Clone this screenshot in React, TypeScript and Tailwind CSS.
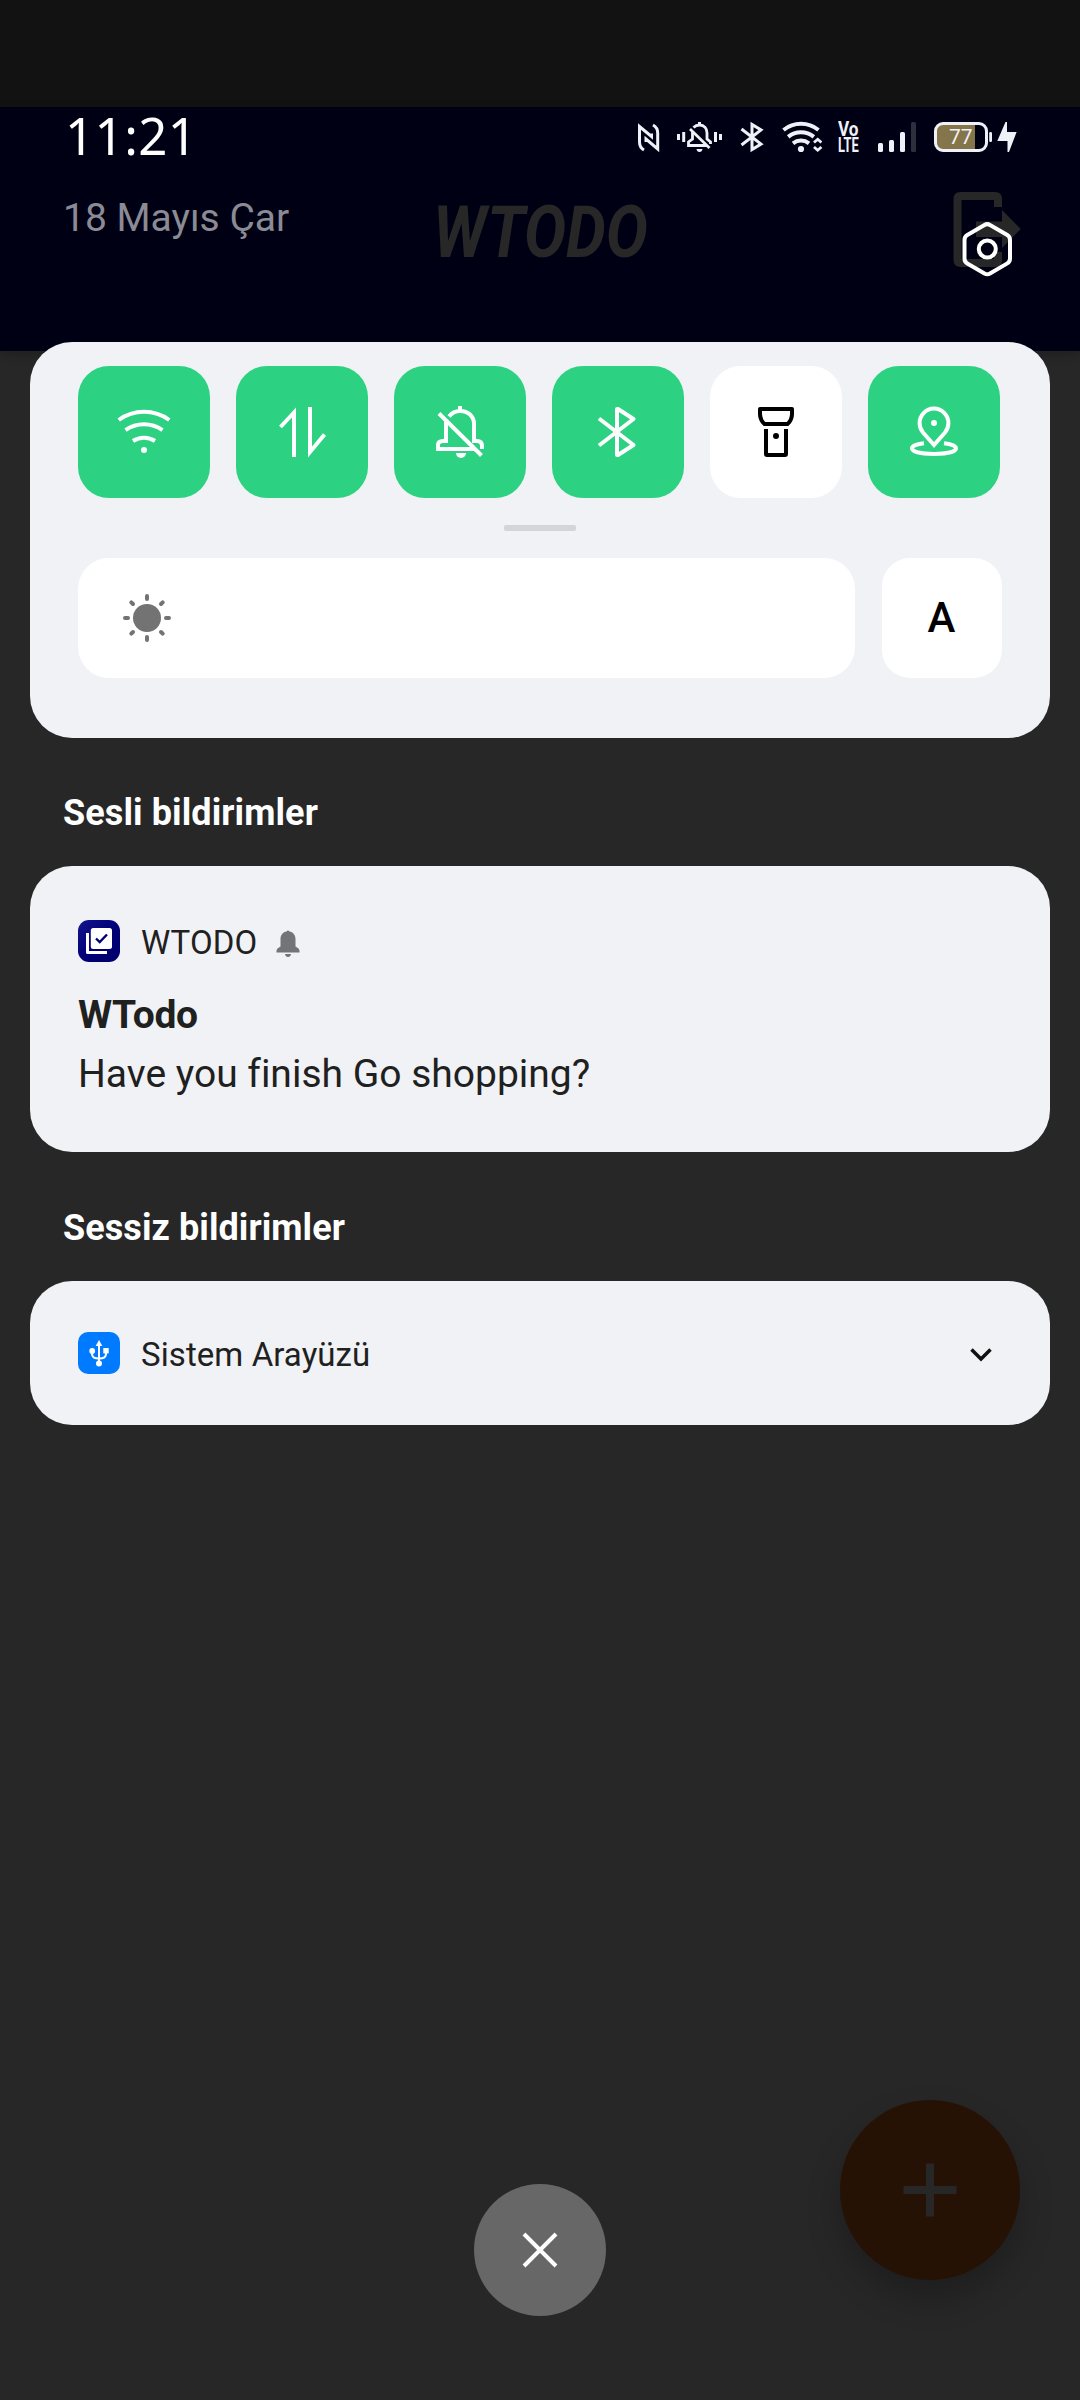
import type { ReactNode } from 'react';

const roboto = "font-['Roboto',sans-serif]";

function NfcIcon() {
  return (
    <svg width="40" height="45" viewBox="10 15 40 45" fill="none" stroke="#f0f1f8" strokeWidth="3">
      <path d="M24 50Q19.5 47.500 19.500 42V26.500L31.500 36.500V33.500" />
      <path d="M33 25Q37.700 27.500 37.700 33V49L26 39V42" />
    </svg>
  );
}

function VibrateBellOffIcon() {
  return (
    <svg width="60" height="45" viewBox="50 15 60 45" fill="none" stroke="#f0f1f8" strokeWidth="2.800">
      <path d="M58.500 34V40M63.700 32V42M95.500 32V42M100.500 34V40" strokeWidth="3" />
      <path d="M79.500 22V25" strokeWidth="3" />
      <path d="M73.500 27.500Q76 25 79.500 25C84.500 25 87 28.500 87 33V39L90.500 42V44" />
      <path d="M72.500 32V39L68.500 42V45.500H87" />
      <path d="M70 29L89.500 48" />
      <path d="M76.500 49H82.500Q82 52 79.500 52T76.500 49Z" fill="#f0f1f8" stroke="none" />
    </svg>
  );
}

function BluetoothStatusIcon() {
  return (
    <svg width="40" height="45" viewBox="110 15 40 45" fill="none" stroke="#f0f1f8" strokeWidth="3">
      <path d="M121.500 29L141 44L132 49.500V24.500L141 30L121.500 45" />
    </svg>
  );
}

function WifiStatusIcon() {
  return (
    <svg width="60" height="45" viewBox="150 15 60 45" fill="none" stroke="#f0f1f8" strokeWidth="4">
      <path d="M163.500 30A28 28 0 0 1 198.500 30" />
      <path d="M168.200 36.900A20 20 0 0 1 193.800 36.900" />
      <path d="M173 43.300A13 13 0 0 1 189 43.300" />
      <circle cx="181" cy="49" r="3.100" fill="#f0f1f8" stroke="none" />
      <path d="M194 42.500L197.700 39.300L201.400 42.500M194 47L197.700 50.200L201.400 47" strokeWidth="2.800" />
    </svg>
  );
}

function VolteLabel() {
  return (
    <div className="flex h-[45px] w-10 flex-col pt-[7px] pl-2 text-[19.5px] leading-[15.5px] font-bold text-[#f0f1f8]">
      <span className="w-0 origin-left scale-x-[0.88]">Vo</span>
      <span className="w-0 origin-left scale-x-[0.66]">LTE</span>
    </div>
  );
}

function SignalIcon() {
  return (
    <svg width="55" height="45" viewBox="50 15 55 45" fill="#f0f1f8">
      <rect x="58" y="43" width="5" height="9" rx="1.500" />
      <rect x="69" y="40" width="5" height="12" rx="1.500" />
      <rect x="80" y="32" width="5" height="20" rx="1.500" />
      <rect x="91" y="22" width="5" height="30" rx="1.500" fill="#2e2e3d" />
    </svg>
  );
}

function BatteryIcon() {
  return (
    <svg width="100" height="45" viewBox="105 15 100 45">
      <path d="M155 23.500V50.500H123Q115.500 50.500 115.500 43V31Q115.500 23.500 123 23.500Z" fill="#84754a" />
      <rect x="115.500" y="23.500" width="51" height="27" rx="7.500" fill="none" stroke="#f0f1f8" strokeWidth="3" />
      <rect x="169.200" y="32" width="2.800" height="10" rx="1.200" fill="#f0f1f8" />
      <text x="129" y="44" fill="#f0f1f8" textLength="23.500" className={`${roboto} text-[21px]`}>77</text>
      <path d="M185.500 22H187V32H196.600L189 52H187.500V41H177.300Z" fill="#f0f1f8" />
    </svg>
  );
}

function Tile({ on = true, children }: { on?: boolean; children: ReactNode }) {
  return (
    <button className={`size-[132px] rounded-[31px] ${on ? 'bg-[#2cd282] text-white' : 'bg-white text-black'}`}>
      <svg viewBox="0 0 132 132" className="size-full" fill="none" stroke="currentColor" strokeWidth="4">
        {children}
      </svg>
    </button>
  );
}

function AppBadge({ children }: { children: ReactNode }) {
  return (
    <svg width="42" height="42" viewBox="0 0 42 42" className="shrink-0">
      {children}
    </svg>
  );
}

export default function App() {
  return (
    <div className={`relative flex h-[2400px] w-[1080px] flex-col overflow-hidden bg-[#272727] ${roboto}`}>
      <div className="h-[107px] shrink-0 bg-[#121212]" />

      <header className="h-[244px] shrink-0 bg-[#000014] shadow-[0_4px_10px_rgba(0,0,0,0.2)]">
        <div className="flex h-[62px] items-start justify-between pr-[55px] pl-[65px]">
          <time className="-mt-0.5 font-['Noto_Sans',sans-serif] text-[51px] leading-[60px] tracking-[0.4px] text-white">11:21</time>
          <div className="flex pt-2">
            <NfcIcon />
            <VibrateBellOffIcon />
            <BluetoothStatusIcon />
            <WifiStatusIcon />
            <VolteLabel />
            <SignalIcon />
            <BatteryIcon />
          </div>
        </div>
        <div className="flex items-start pr-[59px] pl-[63px]">
          <span className="mt-[19px] w-[370px] text-[39px] leading-[60px] text-[#8b8b93]">18 Mayıs Çar</span>
          <h1 className="mt-7 origin-left scale-x-[0.875] text-[72px] leading-[72px] font-bold whitespace-nowrap text-[#272727] italic">
            WTODO
          </h1>
          <div className="relative mt-[23px] ml-auto h-[86px] w-[68px]">
            <svg width="68" height="75" viewBox="953 192 68 75">
              <path
                d="M998 207V199Q998 196 995 196H960.500Q957.500 196 957.500 199V260Q957.500 263 960.500 263H995Q998 263 998 260V252"
                fill="none"
                stroke="#272727"
                strokeWidth="8"
              />
              <path d="M976 221.500H1002V210L1020.700 229L1002 248V237H976Z" fill="#272727" />
            </svg>
            <svg width="54" height="58" viewBox="960 220 54 58" className="absolute top-[28px] left-[7px]" fill="none" stroke="#fff" strokeWidth="4">
              <path d="M984.500 225Q987.300 223.300 990 225L1007.300 235Q1010 236.600 1010 240V258.500Q1010 261.800 1007.300 263.400L990 273.400Q987.300 275 984.500 273.400L967.300 263.400Q964.500 261.800 964.500 258.500V240Q964.500 236.600 967.300 235Z" />
              <circle cx="987.300" cy="249" r="8.500" />
            </svg>
          </div>
        </div>
      </header>

      <main className="relative -mt-[9px] px-[30px]">
        <section className="h-[396px] rounded-[42px] bg-[#f0f2f6] px-12 pt-6">
          <div className="flex gap-[26px]">
            <Tile>
              <path d="M40.700 54A43 43 0 0 1 91.300 54M47.500 64.200A32 32 0 0 1 84.500 64.200M55 75A20 20 0 0 1 77 75" />
              <circle cx="66" cy="84" r="3" fill="currentColor" stroke="none" />
            </Tile>
            <Tile>
              <path d="M44.500 61L58 46.500V91M74 41V86L88.500 68.500" />
            </Tile>
            <Tile>
              <path d="M66 40V44" />
              <path d="M55 50.500C58 46.500 62 45 66 45C74 45 80 50 80 58V75H83C86.500 75 88 77 88 80V83" />
              <path d="M52 55V75H49Q44 75 44 79V83H80" />
              <path d="M45 47.500L87.500 89.500" />
              <path d="M62 87H72A5 5 0 0 1 62 87Z" fill="currentColor" stroke="none" />
            </Tile>
            <Tile>
              <path d="M47 52.500L81.500 79L66 89H65V43H66L81.500 53L47 79.500" strokeLinejoin="round" />
            </Tile>
            <Tile on={false}>
              <path d="M50 43H82V48Q82 54 77.500 58H54.500Q50 54 50 48Z" strokeLinejoin="round" />
              <path d="M56 63V88Q56 89 57 89H75Q76 89 76 88V63" />
              <circle cx="66" cy="70" r="3" fill="currentColor" stroke="none" />
            </Tile>
            <Tile>
              <path d="M66 79L55 66.500C52.500 63.500 51.600 60.500 51.600 57A14.400 14.400 0 0 1 80.400 57C80.400 60.500 79.500 63.500 77 66.500Z" />
              <circle cx="66" cy="57" r="3" fill="currentColor" stroke="none" />
              <path d="M56 77.200C49 78 44 79.800 44 82.300C44 86 54 88 66 88S88 86 88 82.300C88 79.800 83 78 76 77.200" />
            </Tile>
          </div>

          <div className="mx-auto mt-[27px] h-1.5 w-[72px] rounded-[2px] bg-[#d4d5d8]" />

          <div className="mt-[27px] flex gap-[27px]">
            <div className="flex h-[120px] w-[777px] items-center rounded-[31px] bg-white pl-[45px]">
              <svg width="48" height="48" viewBox="-24 -24 48 48" stroke="#737373" strokeWidth="4" strokeLinecap="round">
                <circle r="14" fill="#737373" stroke="none" />
                <path d="M0 -22V-19M0 22V19M-22 0H-19M22 0H19M15.700 -15.700L14 -14M-15.700 -15.700L-14 -14M15.700 15.700L14 14M-15.700 15.700L-14 14" />
              </svg>
            </div>
            <button className="size-[120px] rounded-[28px] bg-white pr-px text-[42px] leading-[120px] font-medium text-black">A</button>
          </div>
        </section>

        <h2 className="mt-[50px] pl-[33px] text-[36px] leading-[50px] font-bold tracking-[0.1px] text-white">Sesli bildirimler</h2>
        <section className="mt-7 h-[286px] rounded-[42px] bg-[#f0f2f6] px-12 pt-[54px] text-[#1f2020]">
          <div className="flex h-[42px] items-center">
            <AppBadge>
              <defs>
                <linearGradient id="navy" x1="0" y1="0" x2="1" y2="1">
                  <stop offset="0" stopColor="#14148c" />
                  <stop offset="0.500" stopColor="#000078" />
                  <stop offset="1" stopColor="#00006a" />
                </linearGradient>
              </defs>
              <rect width="42" height="42" rx="11" fill="url(#navy)" />
              <path d="M9.500 13V32.500H29" fill="none" stroke="#fff" strokeWidth="3" strokeLinejoin="round" />
              <rect x="12.800" y="8" width="21.200" height="21" rx="2.500" fill="#fff" />
              <path d="M18 18.500L21.700 22L29 14.500" fill="none" stroke="#000070" strokeWidth="2.400" />
            </AppBadge>
            <span className="mt-[3px] ml-[21px] text-[33px] leading-[42px] tracking-[0.1px]">WTODO</span>
            <svg width="24" height="27" viewBox="0 0 24 27" className="mt-[5px] ml-[19px] text-[#737476]" fill="currentColor">
              <path d="M10.500 1.500Q12 -0.500 13.500 1.500C17 2 19.500 5 19.500 9V16.500L22.500 18.500Q23.500 19.500 23.500 21V22.500H0.500V21Q0.500 19.500 1.500 18.500L4.500 16.500V9C4.500 5 7 2 10.500 1.500Z" />
              <path d="M9 24H15Q14.500 27 12 27T9 24Z" />
            </svg>
          </div>
          <p className="mt-[27px] text-[39px] leading-[52px] font-bold tracking-[-0.3px]">WTodo</p>
          <p className="mt-[7px] text-[39px] leading-[52px] [font-variant-ligatures:none]">Have you finish Go shopping?</p>
        </section>

        <h2 className="mt-[51px] pl-[33px] text-[36px] leading-[50px] font-bold tracking-[0.08px] text-white">Sessiz bildirimler</h2>
        <section className="mt-7 flex h-[144px] items-center rounded-[42px] bg-[#f0f2f6] pr-[57px] pl-12 text-[#1f2020]">
          <AppBadge>
            <rect width="42" height="42" rx="10" fill="#007bff" />
            <g fill="none" stroke="#fff" strokeWidth="2">
              <path d="M21 12V31M14 19V22Q14 26.500 21 26.500T28 22V19" />
              <path d="M21 8L24.300 14H17.700Z" fill="#fff" stroke="none" />
              <circle cx="21" cy="31.500" r="3" fill="#fff" stroke="none" />
              <circle cx="14.200" cy="19" r="2.900" fill="#fff" stroke="none" />
              <rect x="25.300" y="16" width="5.400" height="5.400" fill="#fff" stroke="none" />
            </g>
          </AppBadge>
          <span className="mt-[3px] ml-[21px] text-[33px] leading-[42px] tracking-[0.08px]">Sistem Arayüzü</span>
          <svg width="24" height="24" viewBox="0 0 24 24" className="mt-0.5 ml-auto" fill="none" stroke="#111" strokeWidth="3.500">
            <path d="M2.500 7.500L12 17L21.500 7.500" />
          </svg>
        </section>
      </main>

      <button className="absolute top-[2100px] left-[840px] flex size-[180px] items-center justify-center rounded-full bg-[#261204] shadow-[0_18px_34px_rgba(0,0,0,0.24)]">
        <svg width="54" height="54" viewBox="0 0 54 54" stroke="#272727" strokeWidth="8">
          <path d="M27 0.500V53.500M0.500 27H53.500" />
        </svg>
      </button>
      <button className="absolute top-[2184px] left-[474px] flex size-[132px] items-center justify-center rounded-full bg-[#676767]">
        <svg width="36" height="36" viewBox="0 0 36 36" stroke="#fff" strokeWidth="4">
          <path d="M2 2L34 34M34 2L2 34" />
        </svg>
      </button>
    </div>
  );
}
